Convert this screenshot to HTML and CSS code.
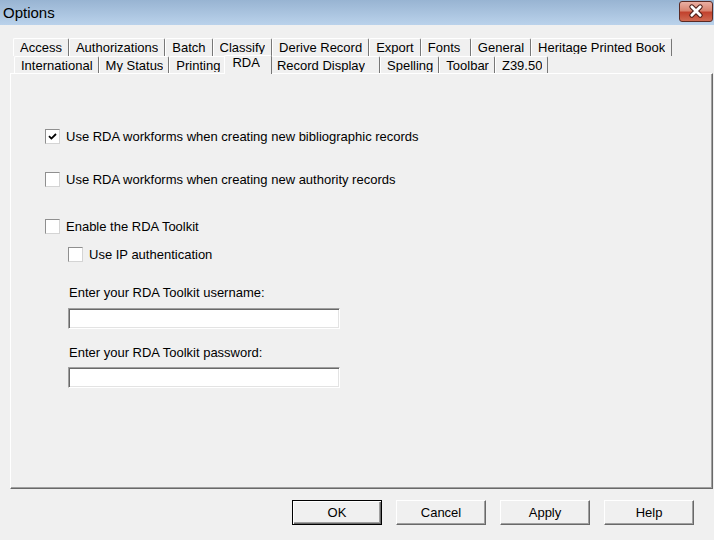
FILE: index.html
```html
<!DOCTYPE html>
<html lang="en">
<head>
    <meta charset="UTF-8">
    <title>Options</title>
    <link rel="stylesheet" href="styles.css">
</head>
<body>
    <div class="titlebar">
        <span class="title">Options</span>
        <button class="close-button" title="Close">
            <svg width="34" height="21" viewBox="0 0 34 21">
                <path d="M12.5 5.5 L21.5 14.5 M21.5 5.5 L12.5 14.5" stroke="#4a1c16" stroke-width="5.2" stroke-linecap="round"/>
                <path d="M12.5 5.5 L21.5 14.5 M21.5 5.5 L12.5 14.5" stroke="#fff" stroke-width="3" stroke-linecap="round"/>
            </svg>
        </button>
    </div>

    <div class="tabs">
        <div class="tab-row row-back">
            <span class="tab"><span class="tab-label">Access</span></span>
            <span class="tab"><span class="tab-label">Authorizations</span></span>
            <span class="tab"><span class="tab-label">Batch</span></span>
            <span class="tab"><span class="tab-label">Classify</span></span>
            <span class="tab"><span class="tab-label">Derive Record</span></span>
            <span class="tab"><span class="tab-label">Export</span></span>
            <span class="tab"><span class="tab-label">Fonts&nbsp;</span></span>
            <span class="tab"><span class="tab-label">General</span></span>
            <span class="tab"><span class="tab-label">Heritage Printed Book</span></span>
        </div>
        <div class="tab-row row-front">
            <span class="tab"><span class="tab-label">International</span></span>
            <span class="tab"><span class="tab-label">My Status</span></span>
            <span class="tab"><span class="tab-label">Printing</span></span>
            <span class="tab selected"><span class="tab-label">RDA</span></span>
            <span class="tab tab-wide"><span class="tab-label">Record Display</span></span>
            <span class="tab"><span class="tab-label">Spelling</span></span>
            <span class="tab"><span class="tab-label">Toolbar</span></span>
            <span class="tab"><span class="tab-label">Z39.50</span></span>
        </div>
    </div>

    <div class="panel">
        <label class="check-row">
            <span class="box">
                <svg width="9" height="9" viewBox="0 0 9 9"><path d="M1 4.2 L3.4 6.6 L8 2" fill="none" stroke="#000" stroke-width="1.8"/></svg>
            </span>
            Use RDA workforms when creating new bibliographic records
        </label>
        <label class="check-row row-authority">
            <span class="box"></span>
            Use RDA workforms when creating new authority records
        </label>
        <label class="check-row row-toolkit">
            <span class="box"></span>
            Enable the RDA Toolkit
        </label>
        <div class="toolkit">
            <label class="check-row">
                <span class="box"></span>
                Use IP authentication
            </label>
            <div class="field-label label-user">Enter your RDA Toolkit username:</div>
            <input class="text-field" type="text">
            <div class="field-label label-pass">Enter your RDA Toolkit password:</div>
            <input class="text-field" type="password">
        </div>
    </div>

    <div class="footer">
        <button class="dlg-button default">OK</button>
        <button class="dlg-button">Cancel</button>
        <button class="dlg-button">Apply</button>
        <button class="dlg-button">Help</button>
    </div>
</body>
</html>
```

FILE: styles.css
```css
body {
    margin: 0;
    width: 714px;
    height: 540px;
    overflow: hidden;
    background-color: #f0f0f0;
    font-family: "Liberation Sans", Arial, sans-serif;
    font-size: 13px;
    color: #000;
}
.titlebar {
    display: flex;
    justify-content: space-between;
    align-items: flex-start;
    height: 25px;
    background: linear-gradient(#98b4d2, #bad2eb);
}
.title {
    padding-left: 3px;
    font-size: 15px;
    line-height: 25px;
}
.close-button {
    margin: 1px 1px 0 0;
    width: 34px;
    height: 21px;
    padding: 0;
    border: 1px solid #5a2a24;
    border-radius: 3px;
    background: linear-gradient(#eab0a4 0%, #d98470 45%, #c2422e 55%, #cf6a52 100%);
    display: flex;
    align-items: center;
    justify-content: center;
}

/* tab strip, two rows */
.tabs {
    padding-top: 13px;
}
.tab-row {
    display: flex;
}
.row-back {
    padding-left: 13px;
    height: 18px;
}
.row-front {
    padding-left: 14px;
    height: 17px;
    align-items: flex-start;
}
.tab {
    box-sizing: border-box;
    height: 18px;
    padding: 1px 6px 0;
    border-top: 1px solid #fff;
    border-left: 1px solid #fff;
    border-right: 1px solid #777;
    border-radius: 2px 2px 0 0;
    white-space: nowrap;
    overflow: hidden;
}
.row-front .tab {
    height: 17px;
    padding: 1px 5px 0 6px;
}
.row-front .tab-wide {
    padding-right: 14px;
}
.tab-label {
    display: block;
    height: 14px;
    line-height: 15px;
    overflow: hidden;
}
.row-front .tab.selected {
    position: relative;
    z-index: 1;
    height: 19px;
    margin: -1px -2px 0 -2px;
    padding: 0 11px 0 7px;
    background-color: #f0f0f0;
}
.tab.selected .tab-label {
    line-height: 13px;
}

.panel {
    box-sizing: border-box;
    margin-left: 10px;
    width: 703px;
    height: 416px;
    border-top: 1px solid #fff;
    border-left: 1px solid #fff;
    border-right: 1px solid #696969;
    border-bottom: 1px solid #696969;
    box-shadow: inset -1px -1px #a0a0a0;
    padding: 55px 0 0 34px;
}
.check-row {
    display: flex;
    align-items: center;
    gap: 6px;
    height: 15px;
    line-height: 15px;
    white-space: nowrap;
}
.box {
    box-sizing: border-box;
    width: 15px;
    height: 15px;
    flex-shrink: 0;
    display: flex;
    align-items: center;
    justify-content: center;
    background-color: #fff;
    border: 1px solid;
    border-color: #8f8f8f #d4d4d4 #d4d4d4 #8f8f8f;
}
.row-authority {
    margin-top: 28px;
}
.row-toolkit {
    margin-top: 32px;
}
.toolkit {
    margin: 13px 0 0 23px;
}
.field-label {
    padding-left: 1px;
    line-height: 15px;
}
.label-user {
    margin-top: 23px;
}
.label-pass {
    margin-top: 16px;
}
.text-field {
    display: block;
    box-sizing: border-box;
    width: 272px;
    height: 21px;
    margin: 8px 0 0 0;
    padding: 0 3px;
    border: 1px solid;
    border-color: #a0a0a0 #fff #fff #a0a0a0;
    box-shadow: inset 1px 1px #696969, inset -1px -1px #e3e3e3;
    background-color: #fff;
    font: inherit;
    outline: none;
}
.label-pass + .text-field {
    margin-top: 7px;
}

.footer {
    display: flex;
    justify-content: flex-end;
    gap: 14px;
    padding: 11px 20px 0 0;
}
.dlg-button {
    box-sizing: border-box;
    width: 90px;
    height: 25px;
    padding: 0;
    border: 1px solid;
    border-color: #fff #696969 #696969 #fff;
    box-shadow: inset -1px -1px #a0a0a0;
    background-color: #f0f0f0;
    font-family: "Liberation Sans", Arial, sans-serif;
    font-size: 13px;
    color: #000;
}
.dlg-button.default {
    border-color: #000;
    box-shadow: inset 1px 1px #fff, inset -1px -1px #696969, inset -2px -2px #a0a0a0;
}
```
